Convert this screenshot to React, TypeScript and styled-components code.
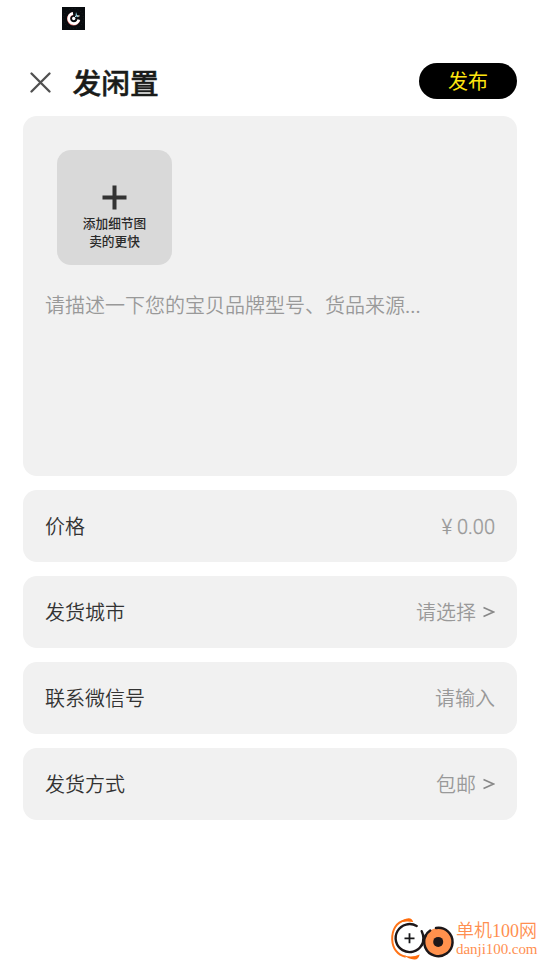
import React from "react";
import styled, { createGlobalStyle } from "styled-components";

const GlobalStyle = createGlobalStyle`
  * { box-sizing: border-box; }
  html, body, #root { height: 100%; }
  body {
    margin: 0;
    background: #fff;
    font-family: Roboto, "Noto Sans CJK SC", sans-serif;
    overflow: hidden;
  }
  button { font: inherit; border: 0; padding: 0; background: none; }
`;

const Screen = styled.main`
  width: 540px;
  height: 960px;
  display: flex;
  flex-direction: column;
  background: #fff;
`;

const StatusBar = styled.div`
  height: 47px;
  padding: 7px 0 0 62px;
  svg { display: block; }
`;

const Header = styled.header`
  height: 69px;
  padding: 0 23px 0 30px;
  display: flex;
  align-items: center;
`;

const CloseButton = styled.button`
  display: block;
  width: 21px;
  height: 21px;
  margin-top: 2px;
  svg { display: block; }
`;

const Title = styled.h1`
  margin: 0 auto 0 21.5px;
  font: 500 28.8px/42px "Noto Sans CJK SC", sans-serif;
  -webkit-text-stroke: 0.45px #1a1c1a;
  color: #1a1c1a;
`;

const PublishButton = styled.button`
  && {
    width: 98px;
    height: 36px;
    margin-top: -1px;
    border-radius: 18px;
    background: #000;
    color: #ffe60f;
    font: 400 20px/36px "Noto Sans CJK SC", sans-serif;
  }
`;

const Form = styled.div`
  padding: 0 23px;
  display: flex;
  flex-direction: column;
  gap: 14px;
`;

const Card = styled.section`
  border-radius: 14px;
  background: #f1f1f1;
`;

const Composer = styled(Card)`
  height: 360px;
  padding: 34px 22px 0;
`;

const AddPhoto = styled.button`
  && {
    display: flex;
    flex-direction: column;
    align-items: center;
    width: 115px;
    height: 115px;
    margin-left: 12px;
    padding-top: 35px;
    border-radius: 14px;
    background: #d9d9d9;
    color: #2a2a2a;
    font: 500 12.7px/18px "Noto Sans CJK SC", sans-serif;
  }
  svg { display: block; margin: 0 1px 4px 0; }
`;

const Placeholder = styled.p`
  margin: 26px 0 0;
  font: 400 20px/30px Roboto, "Noto Sans CJK SC DemiLight", "Noto Sans CJK SC", sans-serif;
  color: #999;
`;

const Row = styled(Card)`
  height: 72px;
  padding: 0 22px;
  display: flex;
  align-items: center;
  justify-content: space-between;
  font-size: 20px;
  line-height: 30px;
`;

const Label = styled.span`
  color: #333;
  font-family: "Noto Sans CJK SC DemiLight", "Noto Sans CJK SC", sans-serif;
`;

const Value = styled.span`
  display: flex;
  align-items: center;
  gap: 7px;
  padding-top: 1px;
  color: #999;
  font-family: Roboto, "Noto Sans CJK SC DemiLight", "Noto Sans CJK SC", sans-serif;
  white-space: pre;
  svg { display: block; margin-bottom: 2px; }
`;

const Price = styled.span`
  font-weight: 300;
  color: #999;
  -webkit-text-stroke: 0.3px #999;
`;

const Watermark = styled.footer`
  margin: auto 2px 0 auto;
  height: 46px;
  display: flex;
  svg { display: block; }
`;

const SiteText = styled.div`
  display: flex;
  flex-direction: column;
  width: 82px;
  color: #ff8f50;
  white-space: nowrap;
  font-family: "Liberation Serif", "Noto Sans CJK SC DemiLight", "Noto Sans CJK SC", serif;
`;

const SiteName = styled.span`
  font-size: 18px;
  line-height: 26px;
  margin-top: 4px;
`;

const SiteAddress = styled.span`
  font-size: 15px;
  line-height: 16px;
  margin-top: -3px;
  letter-spacing: -0.05px;
`;

const AppBadge = () => (
  <svg width="23" height="23" viewBox="0 0 23 23">
    <rect width="23" height="23" fill="#080b0e" />
    <circle cx="11.5" cy="11.5" r="10" fill="none" stroke="#25292b" strokeWidth=".7" strokeDasharray="1 2" />
    <path d="M11 6.7A5.2 5.2 0 1 0 16.8 13" fill="none" stroke="#d96a68" strokeWidth="3.1" />
    <path d="M11 6.4A5.1 5.1 0 1 0 16.8 12.6" fill="none" stroke="#fff" strokeWidth="2.7" />
    <circle cx="11.7" cy="11.5" r="1.7" fill="#fff" />
    <path d="m12 11 3-3" stroke="#d7e3e7" strokeWidth="1" />
    <path d="m14 5 1 3 3 .8-2 1.5-2.5-1Z" fill="#94d1df" />
    <path d="m15.5 8.5 2.5.3-1.5 1.3Z" fill="#d99a76" />
  </svg>
);

const CloseIcon = () => (
  <svg width="21" height="21" viewBox="0 0 21 21">
    <path d="m1.5 1.5 18 18m0-18-18 18" stroke="#505050" strokeWidth="2.3" strokeLinecap="round" />
  </svg>
);

const PlusIcon = () => (
  <svg width="25" height="25" viewBox="0 0 25 25">
    <path d="M12.5.5v24M.5 12.5h24" stroke="#333" strokeWidth="4" />
  </svg>
);

const Chevron = () => (
  <svg width="12" height="12" viewBox="0 0 12 12">
    <path d="m.5 1.6 10 4.4-10 4.4" fill="none" stroke="#888" strokeWidth="1.6" />
  </svg>
);

const SiteLogo = () => (
  <svg width="66" height="46" viewBox="0.8 0 66 46">
    <path d="M16 6.2C7 8 2.7 16 3 25.5C3.3 34 8 41 16.5 42.8" fill="none" stroke="#ff7418" strokeWidth="2" />
    <path d="M10.5 8.5C13 6.5 15.5 4.2 19.5 4.2Q23 4.5 24 8Q17 6.6 10.5 8.5M15 41.6Q23 44 30.5 40.5Q29 46 25 45.5Q19 45 15 41.6" fill="#ff6b0a" />
    <path d="M27.5 12A14 14 0 1 0 32.5 31.2" fill="none" stroke="#1d1719" strokeWidth="2.4" strokeLinecap="round" />
    <path d="M20.3 19.3v10M15.3 24.3h10" stroke="#171719" strokeWidth="1.8" />
    <circle cx="49.3" cy="27.9" r="14" fill="#ff914d" />
    <path d="M46.8 14A14.2 14.2 0 1 1 36.7 21.2" fill="none" stroke="#1d1719" strokeWidth="2.5" strokeLinecap="round" />
    <path d="M32.5 17.2Q36 24.5 32.5 31.2M36.5 21.5Q38 18.5 41 16.5" fill="none" stroke="#1d1719" strokeWidth="2.4" strokeLinecap="round" />
    <circle cx="49" cy="27.9" r="5" fill="#1d1719" />
  </svg>
);

const fields = [
  { label: "价格", value: <Price>¥ 0.00</Price>, picker: false },
  { label: "发货城市", value: "请选择", picker: true },
  { label: "联系微信号", value: "请输入", picker: false },
  { label: "发货方式", value: "包邮", picker: true },
];

export default function App() {
  return (
    <>
      <GlobalStyle />
      <Screen>
        <StatusBar><AppBadge /></StatusBar>
        <Header>
          <CloseButton aria-label="关闭"><CloseIcon /></CloseButton>
          <Title>发闲置</Title>
          <PublishButton>发布</PublishButton>
        </Header>
        <Form>
          <Composer>
            <AddPhoto>
              <PlusIcon />
              <span>添加细节图</span>
              <span>卖的更快</span>
            </AddPhoto>
            <Placeholder>请描述一下您的宝贝品牌型号、货品来源...</Placeholder>
          </Composer>
          {fields.map(({ label, value, picker }) => (
            <Row key={label}>
              <Label>{label}</Label>
              <Value>{value}{picker && <Chevron />}</Value>
            </Row>
          ))}
        </Form>
        <Watermark>
          <SiteLogo />
          <SiteText>
            <SiteName>单机100网</SiteName>
            <SiteAddress>danji100.com</SiteAddress>
          </SiteText>
        </Watermark>
      </Screen>
    </>
  );
}
